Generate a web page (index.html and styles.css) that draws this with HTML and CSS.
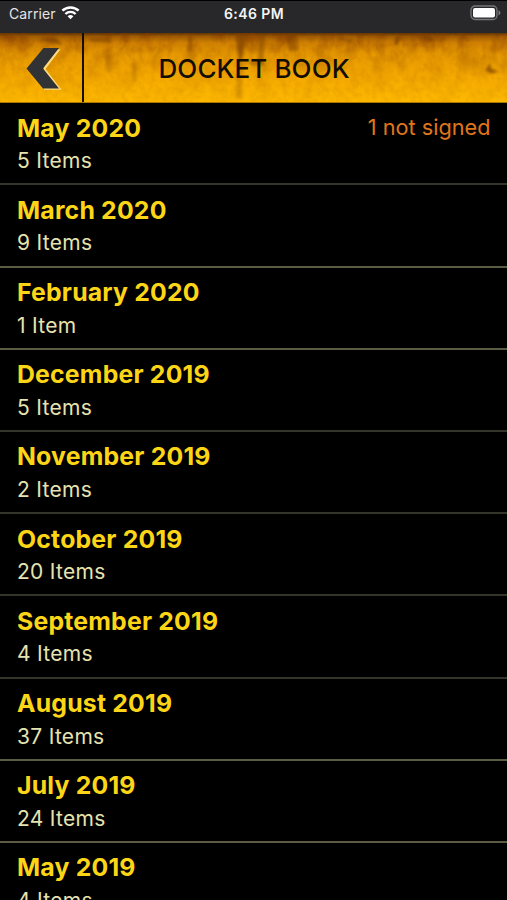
FILE: index.html
```html
<!DOCTYPE html>
<html lang="en">
<head>
    <meta charset="UTF-8">
    <meta name="viewport" content="width=device-width, initial-scale=1.0">
    <title>Docket Book</title>
    <link rel="stylesheet" href="styles.css">
</head>
<body>
    <div class="status-bar">
        <div class="carrier">
            <span>Carrier</span>
            <svg class="wifi" viewBox="0 0 19 15" width="19" height="15">
                <path d="M1.4 5.7a11.6 11.6 0 0 1 16.2 0" fill="none" stroke="#fff" stroke-width="2.5"/>
                <path d="M4.4 9a7.3 7.3 0 0 1 10.2 0" fill="none" stroke="#fff" stroke-width="2.4"/>
                <path d="M9.5 14.3l-2.9-3a4.2 4.2 0 0 1 5.8 0z" fill="#fff"/>
            </svg>
        </div>
        <span class="time">6:46 PM</span>
        <svg class="battery" viewBox="0 0 31 16" width="31" height="16">
            <rect x="1" y="1" width="26" height="13.5" rx="4" fill="none" stroke="#77777a" stroke-width="1.3"/>
            <rect x="3" y="3" width="22" height="9.5" rx="2" fill="#fff"/>
            <path d="M28.5 5.2q2 .8 2 2.6t-2 2.6z" fill="#77777a"/>
        </svg>
    </div>
    <header class="header">
        <svg class="texture" viewBox="0 0 507 70" preserveAspectRatio="none">
            <defs>
                <linearGradient id="base" x1="0" y1="0" x2="0" y2="1">
                    <stop offset="0" stop-color="#5a3208"/>
                    <stop offset=".05" stop-color="#a05c04"/>
                    <stop offset=".14" stop-color="#cf8003"/>
                    <stop offset=".3" stop-color="#e59802"/>
                    <stop offset=".6" stop-color="#f3a801"/>
                    <stop offset="1" stop-color="#fdb900"/>
                </linearGradient>
                <linearGradient id="fade" x1="0" y1="0" x2="0" y2="1">
                    <stop offset="0" stop-color="#fff"/>
                    <stop offset=".25" stop-color="#888"/>
                    <stop offset=".6" stop-color="#333"/>
                    <stop offset="1" stop-color="#111"/>
                </linearGradient>
                <mask id="fadeMask"><rect width="507" height="70" fill="url(#fade)"/></mask>
                <filter id="rust" x="0" y="0" width="1" height="1" color-interpolation-filters="sRGB">
                    <feTurbulence type="fractalNoise" baseFrequency=".07 .05" numOctaves="5" seed="8"/>
                    <feColorMatrix values="0 0 0 0 .5  0 0 0 0 .22  0 0 0 0 0  2.6 0 0 0 -1"/>
                </filter>
                <filter id="grain" x="0" y="0" width="1" height="1" color-interpolation-filters="sRGB">
                    <feTurbulence type="fractalNoise" baseFrequency=".18" numOctaves="3" seed="3"/>
                    <feColorMatrix values="0 0 0 0 .7  0 0 0 0 .38  0 0 0 0 0  2 0 0 0 -.8"/>
                </filter>
                <filter id="soft" x="-50%" y="-50%" width="200%" height="200%" color-interpolation-filters="sRGB">
                    <feGaussianBlur stdDeviation="1.8"/>
                </filter>
            </defs>
            <rect width="507" height="70" fill="url(#base)"/>
            <g mask="url(#fadeMask)">
                <rect width="507" height="70" filter="url(#rust)" opacity=".6"/>
            </g>
            <rect width="507" height="70" filter="url(#grain)" opacity=".15"/>
            <!-- stains -->
            <g fill="#7a3e00" filter="url(#soft)">
                <path d="M235 0h12l-4 22-3 14-2-14z" opacity=".65"/>
                <path d="M237 34h5v32h-6z" opacity=".25"/>
                <path d="M259 0h7l-3 31h-5z" opacity=".45"/>
                <path d="M285 0h11l2 17-8 2z" opacity=".45"/>
                <path d="M188 2h4v16h-4z" opacity=".4"/>
                <path d="M106 14h4v26h-3z" opacity=".25"/>
                <path d="M132 30h4v20h-3z" opacity=".25"/>
                <path d="M40 6l15-2 8 8-14-2z" opacity=".7"/>
                <path d="M88 5l22-1 3 6-22-1z" opacity=".5"/>
                <path d="M248 28h16v5h-12z" opacity=".5"/>
                <path d="M396 3h4l-2 9h-4z" opacity=".8"/>
                <path d="M414 2l20 1-3 5z" opacity=".6"/>
                <path d="M485 38l5-8 1 6 8 3-8 2z" opacity=".75"/>
                <path d="M340 5l14 2-5 4z" opacity=".5"/>
            </g>
        </svg>
        <div class="back">
            <svg viewBox="0 0 36 43" width="36" height="43">
                <path d="M17.5 1.3h17L19.5 21l16 20.8H18z" fill="#ffdc80"/>
                <path d="M17.5 0h15.5L17 20.5l16 20H17L.5 20.5z" fill="#303233"/>
            </svg>
        </div>
        <h1>DOCKET BOOK</h1>
    </header>
    <main class="list">
        <div class="row faint">
            <div class="info"><h2>May 2020</h2><p>5 Items</p></div>
            <span class="unsigned">1 not signed</span>
        </div>
        <div class="row">
            <div class="info"><h2>March 2020</h2><p>9 Items</p></div>
        </div>
        <div class="row">
            <div class="info"><h2>February 2020</h2><p>1 Item</p></div>
        </div>
        <div class="row faint">
            <div class="info"><h2>December 2019</h2><p>5 Items</p></div>
        </div>
        <div class="row faint">
            <div class="info"><h2>November 2019</h2><p>2 Items</p></div>
        </div>
        <div class="row faint">
            <div class="info"><h2>October 2019</h2><p>20 Items</p></div>
        </div>
        <div class="row faint">
            <div class="info"><h2>September 2019</h2><p>4 Items</p></div>
        </div>
        <div class="row">
            <div class="info"><h2>August 2019</h2><p>37 Items</p></div>
        </div>
        <div class="row">
            <div class="info"><h2>July 2019</h2><p>24 Items</p></div>
        </div>
        <div class="row">
            <div class="info"><h2>May 2019</h2><p>4 Items</p></div>
        </div>
    </main>
</body>
</html>
```
FILE: styles.css
```css
* {
    box-sizing: border-box;
}
body {
    margin: 0;
    height: 900px;
    overflow: hidden;
    display: flex;
    flex-direction: column;
    background: #000;
    font-family: Inter, sans-serif;
}
.status-bar {
    flex: none;
    display: grid;
    grid-template-columns: 1fr auto 1fr;
    height: 33px;
    padding: 4px 6px 0 7px;
    border-top: 1px solid #000;
    background: #28282a;
    color: #f4f4f4;
    font-size: 14px;
    line-height: 17px;
}
.carrier {
    display: flex;
    gap: 5px;
    padding-left: 2px;
    color: #e4e4e4;
    letter-spacing: .1px;
}
.time {
    font-weight: 600;
    letter-spacing: .4px;
}
.battery {
    justify-self: end;
}
.header {
    flex: none;
    position: relative;
    display: flex;
    height: 70px;
    border-bottom: 1px solid #a87800;
}
.texture {
    position: absolute;
    inset: 0;
    width: 100%;
    height: 100%;
}
.back {
    position: relative;
    width: 84px;
    padding: 15px 0 0 26px;
    border-right: 2px solid #140d00;
}
h1 {
    position: relative;
    margin: 0;
    padding-left: 74.5px;
    color: #120d05;
    font-size: 26px;
    font-weight: 500;
    line-height: 71px;
    letter-spacing: .1px;
}
.list {
    flex: none;
    padding-top: .3px;
}
.row {
    display: flex;
    justify-content: space-between;
    height: 82.2px;
    padding: 7.3px 16.5px 0 17px;
    border-bottom: 2px solid #5c5c42;
}
.row.faint {
    border-color: #34342a;
}
h2 {
    margin: 0;
    color: #fcd616;
    font-size: 24.8px;
    font-weight: 700;
    line-height: 34px;
    letter-spacing: .2px;
}
p {
    margin: 0;
    padding-top: .6px;
    color: #e6e3b0;
    font-size: 21px;
    line-height: 31px;
    letter-spacing: .3px;
}
.unsigned {
    color: #e0761c;
    font-size: 21.7px;
    line-height: 33px;
}
```
